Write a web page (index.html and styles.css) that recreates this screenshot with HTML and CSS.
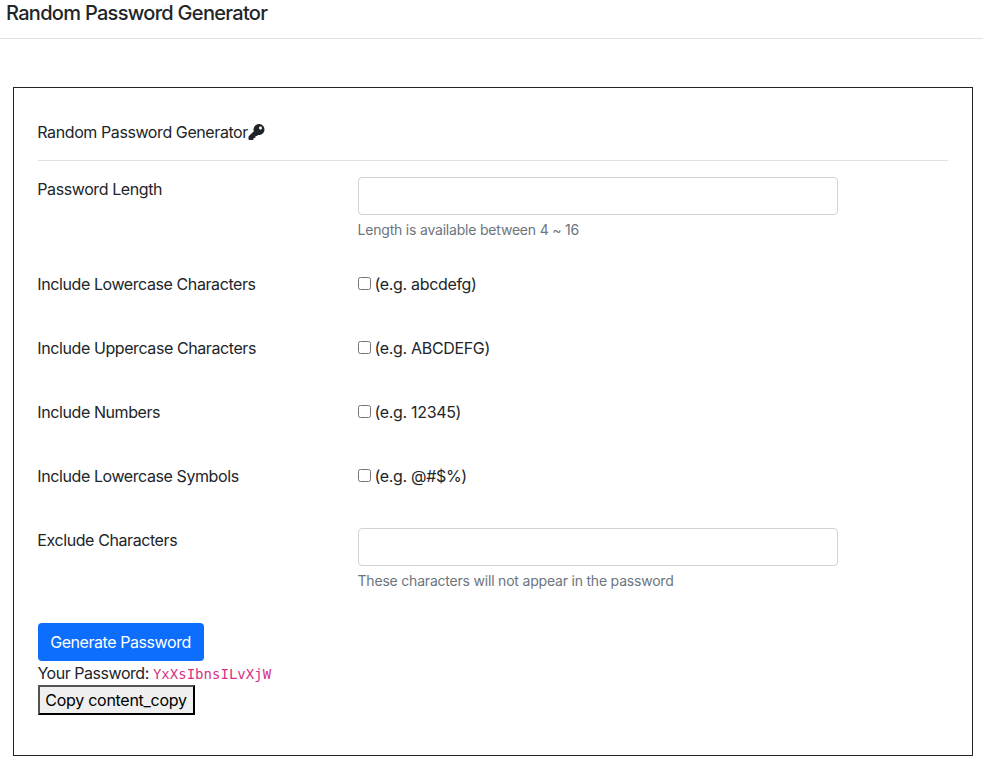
FILE: index.html
```html
<!DOCTYPE html>
<html lang="en">
<head>
<meta charset="utf-8">
<title>Random Password Generator</title>
<link rel="stylesheet" href="styles.css">
</head>
<body>
<header class="topbar"><h1>Random Password Generator</h1></header>
<main class="card">
  <div class="card-title"><span>Random Password Generator</span><svg class="key" viewBox="0 0 512 512"><path fill="currentColor" d="M512 176c0 97.200-78.800 176-176 176-11.220 0-22.190-1.060-32.830-3.070l-24.010 27.010A24 24 0 0 1 261.220 384H224v40c0 13.250-10.750 24-24 24h-40v40c0 13.250-10.750 24-24 24H24c-13.250 0-24-10.750-24-24v-78.060c0-6.370 2.530-12.470 7.030-16.970l161.800-161.800C163.110 213.810 160 195.270 160 176 160 78.800 238.800 0 336 0c97.490 0 176 78.510 176 176zM336 128c0 26.510 21.490 48 48 48s48-21.490 48-48-21.490-48-48-48-48 21.490-48 48z"/></svg></div>
  <form>
    <div class="row field"><label>Password Length</label><div><input class="control" type="text"><small>Length is available between 4 ~ 16</small></div></div>
    <div class="row check"><label>Include Lowercase Characters</label><div><input type="checkbox"><span>(e.g. abcdefg)</span></div></div>
    <div class="row check"><label>Include Uppercase Characters</label><div><input type="checkbox"><span>(e.g. ABCDEFG)</span></div></div>
    <div class="row check"><label>Include Numbers</label><div><input type="checkbox"><span>(e.g. 12345)</span></div></div>
    <div class="row check"><label>Include Lowercase Symbols</label><div><input type="checkbox"><span>(e.g. @#$%)</span></div></div>
    <div class="row field"><label>Exclude Characters</label><div><input class="control" type="text"><small>These characters will not appear in the password</small></div></div>
    <button class="primary" type="button">Generate Password</button>
  </form>
  <div class="result">Your Password: <code>YxXsIbnsILvXjW</code></div>
  <button class="copy" type="button">Copy content_copy</button>
</main>
</body>
</html>
```
FILE: styles.css
```css
* { box-sizing: border-box; }
body { margin: 0; font: 16px/24px Inter, "Liberation Sans", sans-serif; letter-spacing: -0.41px; color: #212529; background: #fff; }
.topbar { height: 39px; padding-left: 6px; border-bottom: 1px solid #dee2e6; }
h1 { margin: 0; font-size: 20px; line-height: 26px; font-weight: 500; letter-spacing: -0.7px; }
.card { margin: 48px 10px 0 13px; height: 669px; padding: 32px 24px 0; border: 1px solid #212529; }
.card-title { display: flex; align-items: center; height: 41px; padding-bottom: 16px; border-bottom: 1px solid #dee2e6; }
.card-title span, .row label { margin-left: -0.7px; }
.key { width: 17px; height: 16px; }
.row { display: grid; grid-template-columns: 320px 480px; align-items: start; }
.field { padding-top: 16px; height: 79px; }
.field + .check { margin-top: 32px; }
.check { height: 64px; }
.check > div { display: flex; letter-spacing: -0.33px; }
.check input { width: 13px; height: 13px; margin: 5px 3.500px 0 0; }
.control { display: block; width: 480px; height: 38px; border: 1px solid #ced4da; border-radius: 4px; background: #fff; }
small { display: block; margin: 4px 0 0 -0.5px; font-size: 14px; line-height: 21px; letter-spacing: -0.2px; color: #6c757d; }
.check + .field { padding-top: 0; height: 95px; }
button { font: inherit; letter-spacing: inherit; }
.primary { display: block; width: 166px; height: 38px; padding: 0 1px 0 0; border: 0; border-radius: 4px; background: #0d6efd; color: #fff; letter-spacing: -0.43px; }
.result { margin-left: -0.6px; letter-spacing: -0.46px; }
code { font: 14px "DejaVu Sans Mono", monospace; letter-spacing: 0.02px; color: #d63384; }
.copy { display: block; width: 157px; height: 30px; padding: 0 1px 0 0; border: 2px outset #000; background: #efefef; color: #000; letter-spacing: -0.28px; }
```
